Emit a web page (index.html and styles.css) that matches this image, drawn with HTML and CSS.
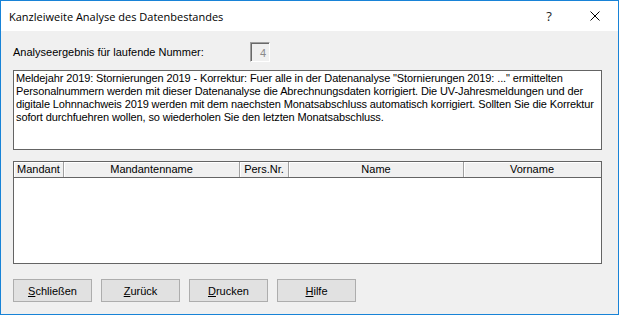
FILE: index.html
```html
<!DOCTYPE html>
<html lang="de">
<head>
    <meta charset="UTF-8">
    <title>Kanzleiweite Analyse des Datenbestandes</title>
    <link rel="stylesheet" href="styles.css">
</head>
<body>
    <div class="window">
        <div class="titlebar">
            <div class="title">Kanzleiweite Analyse des Datenbestandes</div>
            <div class="caption-btn help">?</div>
            <div class="caption-btn close">
                <svg width="10" height="10" viewBox="0 0 10 10">
                    <path d="M0.5 0.5 L9.5 9.5 M9.5 0.5 L0.5 9.5" stroke="#000" stroke-width="1" fill="none"/>
                </svg>
            </div>
        </div>

        <div class="content">
            <div class="number-row">
                <span class="label">Analyseergebnis für laufende Nummer:</span>
                <span class="number-field">4</span>
            </div>

            <div class="message">Meldejahr 2019: Stornierungen 2019 - Korrektur: Fuer alle in der Datenanalyse "Stornierungen 2019: ..." ermittelten<br>Personalnummern werden mit dieser Datenanalyse die Abrechnungsdaten korrigiert. Die UV-Jahresmeldungen und der<br>digitale Lohnnachweis 2019 werden mit dem naechsten Monatsabschluss automatisch korrigiert. Sollten Sie die Korrektur<br>sofort durchfuehren wollen, so wiederholen Sie den letzten Monatsabschluss.</div>

            <div class="list">
                <div class="list-header">
                    <div class="col col-mandant">Mandant</div>
                    <div class="col col-mname">Mandantenname</div>
                    <div class="col col-pers">Pers.Nr.</div>
                    <div class="col col-name">Name</div>
                    <div class="col col-vorname">Vorname</div>
                </div>
            </div>

            <div class="buttons">
                <button class="btn"><u>S</u>chließen</button>
                <button class="btn"><u>Z</u>urück</button>
                <button class="btn"><u>D</u>rucken</button>
                <button class="btn"><u>H</u>ilfe</button>
            </div>
        </div>
    </div>
</body>
</html>
```

FILE: styles.css
```css
* {
    margin: 0;
    padding: 0;
    box-sizing: border-box;
}

body {
    font-family: "Liberation Sans", Arial, sans-serif;
    font-size: 11px;
    color: #000;
    background: #f0f0f0;
}

.window {
    width: 619px;
    height: 315px;
    border: 1px solid #1883d7;
    background: #f0f0f0;
    overflow: hidden;
}

.titlebar {
    height: 30px;
    background: #fff;
    display: flex;
    align-items: center;
}

.title {
    flex: 1;
    padding-left: 8px;
    font-family: "Open Sans", "Noto Sans", sans-serif;
    font-size: 11px;
    color: #000;
}

.caption-btn {
    width: 46px;
    height: 30px;
    display: flex;
    align-items: center;
    justify-content: center;
    font-family: "Open Sans", "Noto Sans", sans-serif;
    font-size: 13px;
    color: #222;
}

.content {
    padding: 11px 16px 0 12px;
}

.number-row {
    display: flex;
    align-items: center;
    height: 20px;
}

.label {
    width: 237px;
}

.number-field {
    width: 20px;
    height: 20px;
    border-top: 1px solid #a0a0a0;
    border-left: 1px solid #a0a0a0;
    border-right: 1px solid #fff;
    border-bottom: 1px solid #fff;
    box-shadow: inset 1px 1px 0 #696969;
    color: #8a8a8a;
    text-align: right;
    padding: 2px 3px 0 0;
    line-height: 16px;
}

.message {
    margin-top: 8px;
    height: 80px;
    background: #fff;
    border: 1px solid #646464;
    padding: 1px 2px;
    line-height: 13px;
    letter-spacing: -0.12px;
    white-space: nowrap;
    overflow: hidden;
}

.list {
    margin-top: 11px;
    height: 103px;
    background: #fff;
    border: 1px solid #646464;
}

.list-header {
    display: flex;
    height: 16px;
    background: #f0f0f0;
    border-bottom: 1px solid #646464;
}

.col {
    height: 15px;
    line-height: 14px;
    text-align: center;
    border-right: 1px solid #a0a0a0;
    box-shadow: inset 1px 1px 0 #fff;
    overflow: hidden;
}

.col-mandant {
    width: 50px;
    text-align: left;
    padding-left: 3px;
}

.col-mname { width: 176px; }
.col-pers { width: 49px; }
.col-name { width: 175px; }

.col-vorname {
    width: 136px;
    border-right: none;
}

.buttons {
    margin-top: 15px;
    display: flex;
    gap: 9px;
}

.btn {
    width: 79px;
    height: 23px;
    background: #e1e1e1;
    border: 1px solid #adadad;
    font-family: inherit;
    font-size: 11px;
    color: #000;
    padding-top: 1px;
}
```
